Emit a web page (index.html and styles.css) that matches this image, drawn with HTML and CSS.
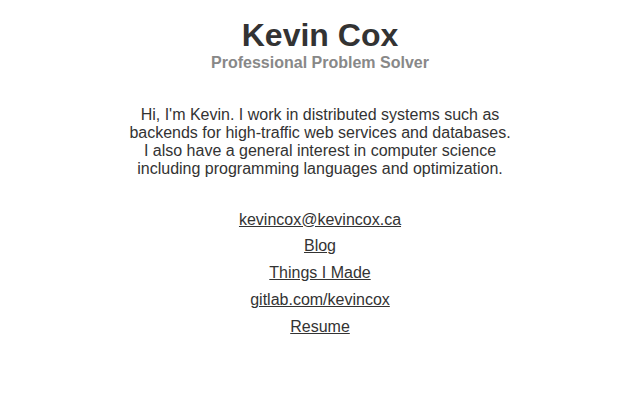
FILE: index.html
```html
<!DOCTYPE html>
<html>
<head>
<meta charset="utf-8">
<link rel="stylesheet" href="styles.css">
</head>
<body>
<div class="page">
  <header class="head">
    <h1 class="name">Kevin Cox</h1>
    <div class="tagline">Professional Problem Solver</div>
  </header>
  <p class="intro">Hi, I'm Kevin. I work in distributed systems such as backends for high-traffic web services and databases. I also have a general interest in computer science including programming languages and optimization.</p>
  <nav class="links">
    <a href="#">kevincox@kevincox.ca</a>
    <a href="#">Blog</a>
    <a href="#">Things I Made</a>
    <a href="#">gitlab.com/kevincox</a>
    <a href="#">Resume</a>
  </nav>
</div>
</body>
</html>
```

FILE: styles.css
```css
html, body {
  margin: 0;
  padding: 0;
  background: #ffffff;
}
body {
  font-family: "Liberation Sans", Arial, Helvetica, sans-serif;
  font-size: 16px;
  color: #333333;
}
.page {
  display: flex;
  flex-direction: column;
  align-items: center;
  padding-top: 16.5px;
}
.head {
  text-align: center;
}
.name {
  margin: 0;
  font-size: 32px;
  font-weight: bold;
  color: #333333;
  line-height: normal;
}
.tagline {
  font-size: 16px;
  font-weight: bold;
  color: #888888;
}
.intro {
  margin: 34px 0 0 0;
  max-width: 384px;
  text-align: center;
}
.links {
  margin-top: 33px;
  display: flex;
  flex-direction: column;
  align-items: center;
  gap: 8.8px;
}
.links a {
  color: #333333;
  text-decoration: underline;
}
```
